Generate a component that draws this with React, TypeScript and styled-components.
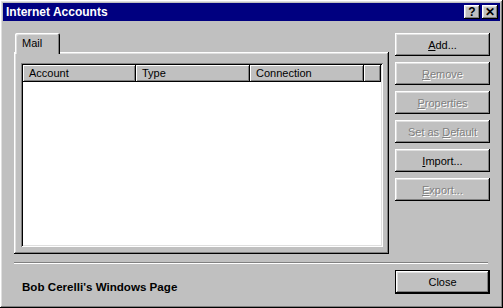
import styled, { createGlobalStyle } from 'styled-components';
import { ReactNode } from 'react';

const GlobalStyle = createGlobalStyle`
  html, body {
    margin: 0;
    padding: 0;
    background: #c0c0c0;
  }
  * {
    box-sizing: border-box;
  }
`;

const raised = `
  box-shadow: inset -1px -1px 0 #000, inset 1px 1px 0 #fff, inset -2px -2px 0 #808080, inset 2px 2px 0 #dfdfdf;
`;

const Window = styled.div`
  width: 503px;
  height: 308px;
  background: #c0c0c0;
  padding: 3px;
  display: flex;
  flex-direction: column;
  font-family: "Liberation Sans", Arial, sans-serif;
  font-size: 11px;
  color: #000;
  ${raised}
`;

const TitleBar = styled.div`
  height: 18px;
  background: #000080;
  color: #fff;
  display: flex;
  align-items: center;
  justify-content: space-between;
  padding: 0 2px 0 3px;
`;

const TitleText = styled.span`
  font-weight: bold;
  font-size: 12px;
`;

const TitleButtons = styled.div`
  display: flex;
  gap: 2px;
`;

const TitleButton = styled.div`
  width: 16px;
  height: 14px;
  background: #c0c0c0;
  color: #000;
  font-weight: bold;
  font-size: 12px;
  display: flex;
  align-items: center;
  justify-content: center;
  ${raised}
`;

const Body = styled.div`
  flex: 1;
  display: flex;
  flex-direction: column;
  padding: 12px 10px 0 11px;
`;

const MainRow = styled.div`
  display: flex;
  gap: 6px;
  height: 221px;
`;

const TabArea = styled.div`
  width: 375px;
  flex: none;
  display: flex;
  flex-direction: column;
`;

const TabStrip = styled.div`
  display: flex;
  padding-left: 1px;
  height: 19px;
  position: relative;
  z-index: 1;
`;

const Tab = styled.div`
  width: 45px;
  height: 21px;
  background: #c0c0c0;
  padding: 4px 0 0 7px;
  border-radius: 2px 2px 0 0;
  box-shadow: inset 1px 1px 0 #fff, inset -1px 0 0 #000, inset -2px 0 0 #808080, inset 2px 2px 0 #dfdfdf;
`;

const Panel = styled.div`
  flex: 1;
  padding: 11px 6px 7px 7px;
  display: flex;
  ${raised}
`;

const ListBox = styled.div`
  flex: 1;
  background: #fff;
  padding: 2px;
  display: flex;
  flex-direction: column;
  box-shadow: inset 1px 1px 0 #808080, inset -1px -1px 0 #fff, inset 2px 2px 0 #000, inset -2px -2px 0 #dfdfdf;
`;

const HeaderRow = styled.div`
  display: flex;
  height: 17px;
`;

const HeaderCell = styled.div<{ w: number }>`
  width: ${p => p.w}px;
  flex: ${p => (p.w ? 'none' : '1')};
  background: #c0c0c0;
  padding: 2px 0 0 6px;
  white-space: nowrap;
  box-shadow: inset -1px -1px 0 #000, inset 1px 1px 0 #fff, inset -2px -2px 0 #808080;
`;

const ButtonColumn = styled.div`
  width: 95px;
  flex: none;
  display: flex;
  flex-direction: column;
  gap: 6px;
`;

const Button = styled.div<{ disabled?: boolean; isDefault?: boolean }>`
  height: 23px;
  display: flex;
  align-items: center;
  justify-content: center;
  background: #c0c0c0;
  color: ${p => (p.disabled ? '#808080' : '#000')};
  text-shadow: ${p => (p.disabled ? '1px 1px 0 #fff' : 'none')};
  ${p =>
    p.isDefault
      ? 'box-shadow: inset 0 0 0 1px #000, inset -2px -2px 0 #000, inset 2px 2px 0 #fff, inset -3px -3px 0 #808080, inset 3px 3px 0 #dfdfdf;'
      : raised}

  u {
    text-decoration: underline;
    text-underline-offset: 1px;
  }
`;

const Separator = styled.div`
  margin: 8px 2px 0 0;
  height: 2px;
  border-top: 1px solid #808080;
  border-bottom: 1px solid #fff;
`;

const Footer = styled.div`
  margin-top: 6px;
  display: flex;
  justify-content: space-between;
  align-items: flex-end;
`;

const FooterText = styled.span`
  font-weight: bold;
  font-size: 11.6px;
  padding: 0 0 0 8px;
  margin-bottom: 1px;
`;

const CloseButton = styled(Button)`
  width: 95px;
  height: 24px;
`;

interface ActionProps {
  children: ReactNode;
  disabled?: boolean;
}

const Action = ({ children, disabled }: ActionProps) => (
  <Button disabled={disabled}>
    <span>{children}</span>
  </Button>
);

export default function App() {
  return (
    <>
      <GlobalStyle />
      <Window>
        <TitleBar>
          <TitleText>Internet Accounts</TitleText>
          <TitleButtons>
            <TitleButton>?</TitleButton>
            <TitleButton>✕</TitleButton>
          </TitleButtons>
        </TitleBar>
        <Body>
          <MainRow>
            <TabArea>
              <TabStrip>
                <Tab>Mail</Tab>
              </TabStrip>
              <Panel>
                <ListBox>
                  <HeaderRow>
                    <HeaderCell w={113}>Account</HeaderCell>
                    <HeaderCell w={114}>Type</HeaderCell>
                    <HeaderCell w={114}>Connection</HeaderCell>
                    <HeaderCell w={0} />
                  </HeaderRow>
                </ListBox>
              </Panel>
            </TabArea>
            <ButtonColumn>
              <Action><u>A</u>dd...</Action>
              <Action disabled><u>R</u>emove</Action>
              <Action disabled><u>P</u>roperties</Action>
              <Action disabled>Set as <u>D</u>efault</Action>
              <Action><u>I</u>mport...</Action>
              <Action disabled><u>E</u>xport...</Action>
            </ButtonColumn>
          </MainRow>
          <Separator />
          <Footer>
            <FooterText>Bob Cerelli's Windows Page</FooterText>
            <CloseButton isDefault>Close</CloseButton>
          </Footer>
        </Body>
      </Window>
    </>
  );
}
